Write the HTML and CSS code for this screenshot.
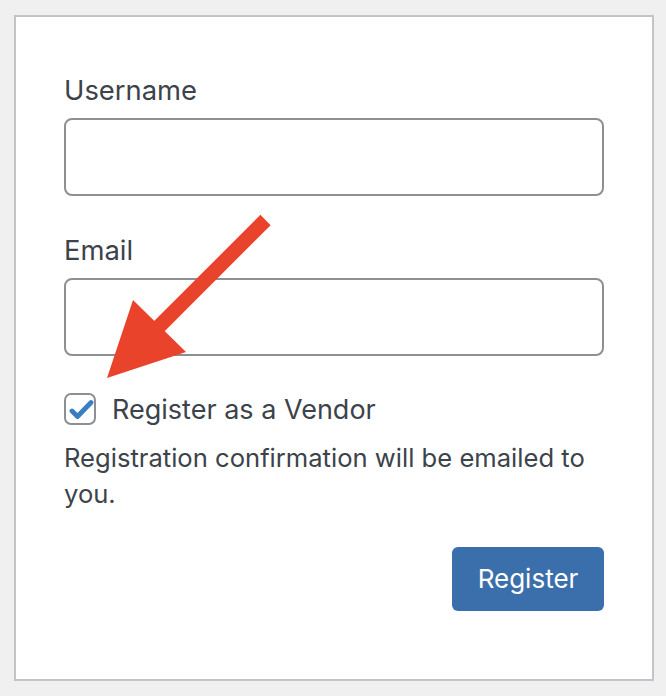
FILE: index.html
```html
<!DOCTYPE html>
<html lang="en">
<head>
<meta charset="utf-8">
<title>Register</title>
<link rel="stylesheet" href="styles.css">
</head>
<body>
<form class="card">
  <label class="field-label" for="user">Username</label>
  <input class="text-input" id="user" type="text">
  <label class="field-label field-label--next" for="email">Email</label>
  <input class="text-input" id="email" type="text">
  <div class="check-row">
    <span class="checkbox">
      <svg viewBox="0 0 28 28" width="28" height="28" aria-hidden="true"><polyline points="6,16 11.5,21.5 25,7.5" fill="none" stroke="#3a7ec2" stroke-width="4.8" stroke-linecap="round" stroke-linejoin="round"/></svg>
    </span>
    <span class="check-label">Register as a Vendor</span>
  </div>
  <p class="note">Registration confirmation will be emailed to you.</p>
  <div class="actions">
    <button type="button" class="btn-primary">Register</button>
  </div>
</form>
<svg class="annotation" width="666" height="696" viewBox="0 0 666 696" aria-hidden="true">
  <line x1="265.5" y1="220" x2="158" y2="327.5" stroke="#e9432b" stroke-width="14.5"/>
  <polygon points="107,378 133,300 186,352" fill="#e9432b"/>
</svg>
</body>
</html>
```
FILE: styles.css
```css
html, body {
  margin: 0;
  padding: 0;
}
body {
  background: #f0f0f1;
  font-family: Inter, "Noto Sans", "Liberation Sans", sans-serif;
  color: #3c434a;
  width: 666px;
  height: 696px;
  position: relative;
  overflow: hidden;
}
.card {
  box-sizing: border-box;
  margin: 15px 0 0 14px;
  width: 640px;
  height: 666px;
  background: #fff;
  border: 2px solid #c3c4c7;
  padding: 52px 48px 0 48px;
  display: flex;
  flex-direction: column;
}
.field-label {
  display: block;
  font-size: 27.4px;
  line-height: 42px;
  height: 42px;
  margin-bottom: 7px;
}
.field-label--next {
  margin-top: 33px;
}
.text-input {
  box-sizing: border-box;
  display: block;
  width: 540px;
  height: 78px;
  margin: 0;
  border: 2px solid #8c8f94;
  border-radius: 8px;
  background: #fff;
  font: inherit;
  font-size: 28px;
  padding: 0 16px;
  outline: none;
}
.check-row {
  display: flex;
  align-items: center;
  gap: 16px;
  height: 32px;
  margin-top: 37px;
}
.checkbox {
  box-sizing: border-box;
  width: 32px;
  height: 32px;
  border: 2px solid #8c8f94;
  border-radius: 7px;
  background: #fff;
  display: flex;
  align-items: center;
  justify-content: center;
  flex: none;
}
.check-label {
  font-size: 27px;
  line-height: 36px;
  margin-top: 2px;
}
.note {
  margin: 15px 0 0 0;
  font-size: 25.6px;
  line-height: 36.4px;
}
.actions {
  display: flex;
  justify-content: flex-end;
  margin-top: 34px;
}
.btn-primary {
  box-sizing: border-box;
  height: 64px;
  padding: 0 24px;
  min-width: 152px;
  border: none;
  border-radius: 6px;
  background: #3b6fab;
  color: #fff;
  font-family: inherit;
  font-size: 26px;
  line-height: 64px;
  cursor: pointer;
}
.annotation {
  position: absolute;
  left: 0;
  top: 0;
  pointer-events: none;
}
```
